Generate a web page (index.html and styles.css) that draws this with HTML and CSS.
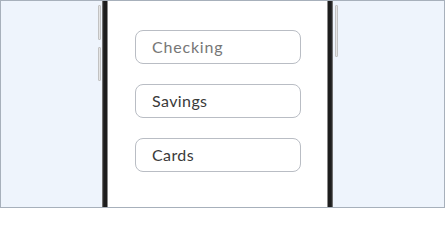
FILE: index.html
```html
<!DOCTYPE html>
<html lang="en">
<head>
<meta charset="utf-8">
<title>Accounts</title>
<link rel="stylesheet" href="styles.css">
</head>
<body>
<div class="frame">
  <div class="device">
    <div class="side side-left">
      <span class="btn btn-a"></span>
      <span class="btn btn-b"></span>
    </div>
    <div class="phone">
      <div class="screen">
        <input class="field field-placeholder" type="text" placeholder="Checking">
        <div class="field">Savings</div>
        <div class="field">Cards</div>
      </div>
    </div>
    <div class="side side-right">
      <span class="btn btn-c"></span>
    </div>
  </div>
</div>
</body>
</html>
```

FILE: styles.css
```css
html, body {
  margin: 0;
  padding: 0;
}

body {
  width: 445px;
  height: 208px;
  overflow: hidden;
  font-family: "Lato", "Open Sans", sans-serif;
}

.frame {
  box-sizing: border-box;
  width: 445px;
  height: 208px;
  border: 1px solid #a7b0bb;
  background: #eef4fc;
  overflow: hidden;
}

.device {
  display: flex;
  align-items: flex-start;
  margin-left: 97px;
  margin-top: -21px;
}

.side {
  display: flex;
  flex-direction: column;
  gap: 7px;
  padding-top: 25px;
}

.side-left {
  margin-right: 1px;
}

.side-right {
  margin-left: 2px;
}

.btn {
  display: block;
  width: 3px;
  box-sizing: border-box;
  background: #e4e4e4;
  border: 1px solid #c2c2c2;
  border-radius: 1px;
}

.btn-a { height: 35px; }
.btn-b { height: 34px; }
.btn-c { height: 52px; }

.phone {
  box-sizing: border-box;
  width: 231px;
  height: 260px;
  background: #2a2a2a;
  border: 1px solid #6f6f6f;
  padding: 0 1px;
  border-radius: 14px;
}

.screen {
  box-sizing: border-box;
  height: 100%;
  background: #fff;
  background-clip: padding-box;
  border-left: 3px solid #1d1d1d;
  border-right: 3px solid #1d1d1d;
  box-shadow: inset 1px 0 0 #8a8a8a, inset -1px 0 0 #8a8a8a;
  padding: 49px 26px 0 28px;
  display: flex;
  flex-direction: column;
  gap: 20px;
}

.field {
  box-sizing: border-box;
  width: 166px;
  height: 34px;
  border: 1px solid #b9bdc4;
  border-radius: 8px;
  padding: 0 0 1px 16px;
  font-family: "Lato", "Open Sans", sans-serif;
  font-size: 16px;
  letter-spacing: 0.4px;
  color: #3a3a3a;
  display: flex;
  align-items: center;
  background: #fff;
  margin: 0;
  outline: none;
}

.field-placeholder::placeholder {
  color: #767676;
  opacity: 1;
  letter-spacing: 0.8px;
}
```
